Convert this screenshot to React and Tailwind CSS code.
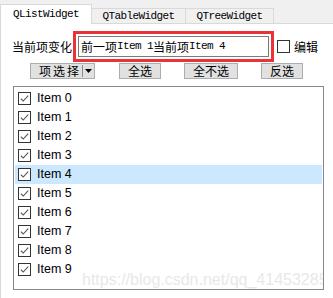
import React from 'react';

const cjk = { fontFamily: '"Noto Sans CJK SC", "Liberation Sans", sans-serif' };
const mono = 'font-["Liberation_Mono",monospace] text-[11px] tracking-[-0.6px]';

const items = ['Item 0', 'Item 1', 'Item 2', 'Item 3', 'Item 4', 'Item 5', 'Item 6', 'Item 7', 'Item 8', 'Item 9'];

const CheckBox = ({ checked }) => (
  <svg width="13" height="13" viewBox="0 0 13 13" className="shrink-0">
    <rect x="0.5" y="0.5" width="12" height="12" fill="#fff" stroke="#333" />
    {checked && <path d="M2.8 6.6 L5.2 9 L10.2 3.6" fill="none" stroke="#555" strokeWidth="1.1" />}
  </svg>
);

const Btn = ({ className, children }) => (
  <div className={`h-[16px] flex items-center justify-center bg-[#e1e1e1] border border-[#adadad] text-[12px] leading-none text-black ${className}`}>
    {children}
  </div>
);

export default function App() {
  return (
    <div className="w-[333px] h-[298px] bg-[#f0f0f0] flex flex-col overflow-hidden" style={cjk}>
      {/* tab bar */}
      <div className="h-[23px] flex items-end shrink-0">
        <div className={`relative z-10 w-[92px] h-[20px] -mb-[1px] bg-white border border-b-0 border-[#d9d9d9] flex items-center justify-center text-black ${mono}`}>
          QListWidget
        </div>
        <div className={`w-[94px] h-[15px] bg-[#f0f0f0] border-t border-r border-[#d9d9d9] flex items-center justify-center text-black ${mono}`}>
          QTableWidget
        </div>
        <div className={`w-[88px] h-[15px] bg-[#f0f0f0] border-t border-r border-[#d9d9d9] flex items-center justify-center text-black ${mono}`}>
          QTreeWidget
        </div>
      </div>

      {/* pane */}
      <div className="flex-1 bg-white border-t border-l border-[#d9d9d9] pt-[7px]">
        <div className="h-[31px] flex items-center pl-[11px]">
          <span className="text-[12px] leading-none text-black w-[61px]">当前项变化</span>
          <div className="w-[201px] h-[31px] border-[3px] border-[#ec3237] p-[2px]">
            <div className="h-[21px] border border-[#7a7a7a] flex items-center pl-[2px] text-[12px] leading-none text-black whitespace-nowrap">
              前一项<span className={mono}>Item 1</span>当前项<span className={mono}>Item 4</span>
            </div>
          </div>
          <div className="ml-[3px] flex items-center gap-[4px]">
            <CheckBox checked={false} />
            <span className="text-[12px] leading-none text-black">编辑</span>
          </div>
        </div>

        <div className="mt-[1px] flex items-center pl-[29px]">
          <Btn className="w-[65px] justify-start pl-[8px]">
            <span className="tracking-[2px]">项选择</span>
            <span className="ml-[1px] h-[12px] border-l border-[#8a8a8a]" />
            <svg width="7" height="4" viewBox="0 0 7 4" className="ml-[2px]"><path d="M0 0 H7 L3.5 4 Z" fill="#000" /></svg>
          </Btn>
          <Btn className="w-[42px] ml-[24px]">全选</Btn>
          <Btn className="w-[54px] ml-[23px]">全不选</Btn>
          <Btn className="w-[42px] ml-[23px]">反选</Btn>
        </div>

        <div className="relative mt-[7px] ml-[12px] w-[311px] h-[204px] border border-[#828790] bg-white pt-[2px] overflow-hidden">
          {items.map((it, i) => (
            <div
              key={it}
              className={`mx-[1px] h-[19px] flex items-center pl-[3px] gap-[6px] ${i === 4 ? 'bg-[#cce8ff]' : ''}`}
            >
              <CheckBox checked />
              <span className='font-["Liberation_Sans",sans-serif] text-[12.5px] leading-none text-black'>{it}</span>
            </div>
          ))}
          <div className='absolute left-[68px] top-[185px] whitespace-nowrap font-["Liberation_Sans",sans-serif] text-[16px] leading-[16px] text-[#e8e8e8]'>
            https://blog.csdn.net/qq_41453285
          </div>
        </div>
      </div>
    </div>
  );
}
